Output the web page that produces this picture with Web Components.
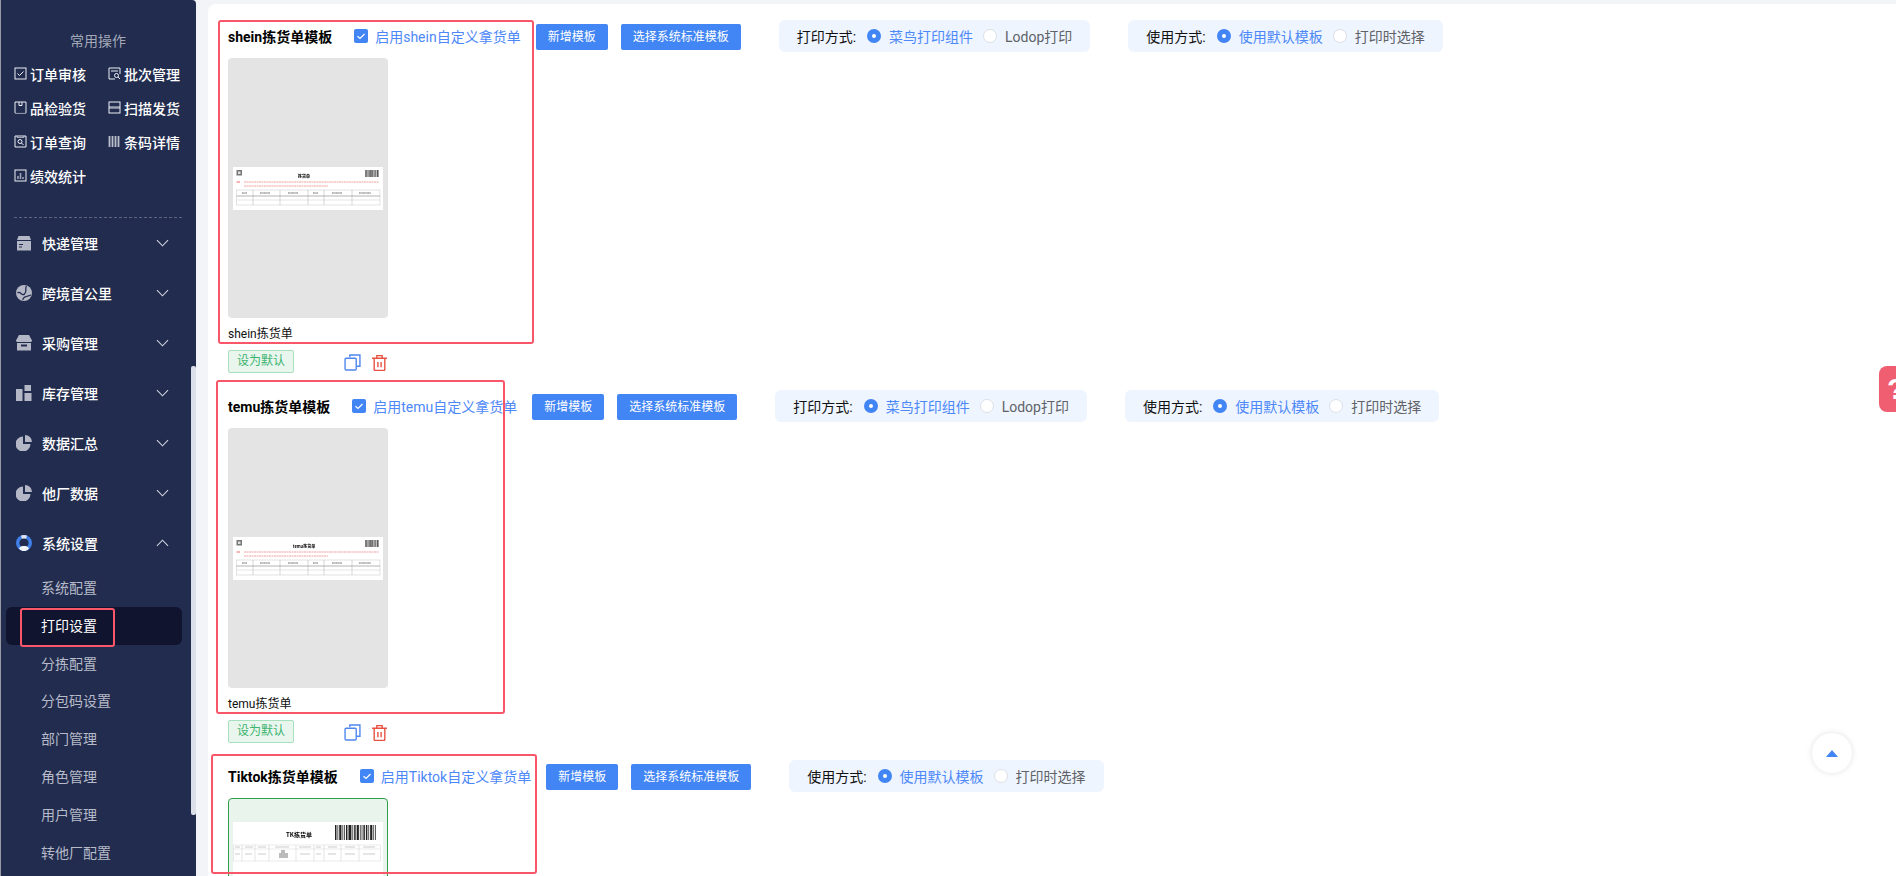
<!DOCTYPE html>
<html lang="zh">
<head>
<meta charset="utf-8">
<title>打印设置</title>
<style>
  html, body { margin: 0; height: 100%; overflow: hidden; background: #f3f4f8; }
  body { font: 14px Roboto, "Noto Sans CJK SC", sans-serif; }
</style>
</head>
<body>
<app-shell>
  <side-nav slot="nav">
    <nav-section>
      <quick-action icon="check" label="订单审核"></quick-action>
      <quick-action icon="batch" label="批次管理"></quick-action>
      <quick-action icon="box" label="品检验货"></quick-action>
      <quick-action icon="scan" label="扫描发货"></quick-action>
      <quick-action icon="search" label="订单查询"></quick-action>
      <quick-action icon="bars" label="条码详情"></quick-action>
      <quick-action icon="chart" label="绩效统计"></quick-action>
    </nav-section>
    <nav-item icon="parcel" label="快递管理"></nav-item>
    <nav-item icon="globe" label="跨境首公里"></nav-item>
    <nav-item icon="store" label="采购管理"></nav-item>
    <nav-item icon="stock" label="库存管理"></nav-item>
    <nav-item icon="pie" label="数据汇总"></nav-item>
    <nav-item icon="pie" label="他厂数据"></nav-item>
    <nav-item icon="ring" label="系统设置" open>
      <sub-item>系统配置</sub-item>
      <sub-item active>打印设置</sub-item>
      <sub-item>分拣配置</sub-item>
      <sub-item>分包码设置</sub-item>
      <sub-item>部门管理</sub-item>
      <sub-item>角色管理</sub-item>
      <sub-item>用户管理</sub-item>
      <sub-item>转他厂配置</sub-item>
    </nav-item>
  </side-nav>

  <pick-section name="shein" title-text="shein拣货单模板" enable="启用shein自定义拿货单" print caption="shein拣货单"></pick-section>
  <pick-section name="temu" title-text="temu拣货单模板" enable="启用temu自定义拿货单" print caption="temu拣货单"></pick-section>
  <pick-section name="tk" title-text="Tiktok拣货单模板" enable="启用Tiktok自定义拿货单"></pick-section>

  <!-- red review marks, they sit on top of the page -->
  <red-mark style="left:218px;top:20px;width:316px;height:324px"></red-mark>
  <red-mark style="left:216px;top:380px;width:289px;height:334px"></red-mark>
  <red-mark style="left:211px;top:754px;width:326px;height:120px"></red-mark>
  <red-mark style="left:20px;top:608px;width:95px;height:39px"></red-mark>
  <help-tab></help-tab>
  <scroll-top></scroll-top>
</app-shell>

<script>
const SMALL_ICONS = {
  check: '<rect x="1" y="1" width="11" height="11"/><path d="M3.500 6.500l2 2 4-4"/>',
  batch: '<path d="M12 7V1H1v11h6"/><path d="M3 4h7"/><circle cx="8.500" cy="8.500" r="2"/><path d="M10 10l2 2"/>',
  box: '<path d="M1 12V1h11v11"/><path d="M1 12.400h11" stroke-opacity=".6"/><path d="M5 1v3.500h3V1"/>',
  scan: '<rect x="1" y="1" width="11" height="11"/><path d="M1 6.500h11" stroke-width="2.400" stroke-opacity=".6"/>',
  search: '<path d="M1 1h11v11H1z"/><path d="M3 1v1.500h7V1" stroke-opacity=".6"/><circle cx="6" cy="6.500" r="2"/><path d="M7.500 8l2 2"/>',
  bars: '<path d="M1.500 1v11M4.500 1v11M7.500 1v11M10.500 1v11" stroke-width="1.800" stroke-opacity=".75"/>',
  chart: '<rect x="1" y="1" width="11" height="11"/><path d="M4 10V7M6.500 10V4M9 10V8" stroke-width="1.600" stroke-opacity=".6"/>'
};

const MENU_ICONS = {
  parcel: '<path d="M1 5l1.500-4h11L15 5z"/><path d="M1 6h14v9.500H1z"/><path d="M3 9.500h4M3 12h3" stroke="#222c4e" stroke-width="1.200"/>',
  globe: '<circle cx="8" cy="8" r="8"/><path d="M1.500 8c3-3 4 4 7 1s0-6 2-8M7 15c-1-3 5-4 8-5" stroke="#222c4e" stroke-width="1.300" fill="none"/>',
  store: '<path d="M3 0h10l3 5.500c0 1-1 1.500-2 1.500H2C1 7 0 6.500 0 5.500z"/><path d="M1 8h14v7.500H1z"/><path d="M5 9.500h6v2H5z" fill="#222c4e"/>',
  stock: '<path d="M0 4h6.500v12H0zM8.500 0H15v6H8.500zM8.500 8H15.500v8H8.500z"/>',
  pie: '<path d="M7 1.500V9h7.500A7.500 7.500 0 1 1 7 1.500z"/><path d="M9 0a7 7 0 0 1 7 7H9z"/>',
  ring: '<circle cx="8" cy="8" r="8" fill="#3f7fe8"/><path d="M5 .6a8 8 0 0 1 6 0L10 4H6z" fill="#dfe4f2"/><circle cx="8" cy="8" r="4.600" fill="#222c4e"/><path d="M3 13.500c1-2 2.500-2.500 5-2.500s4 .5 5 2.500C11.500 15.500 9.500 16 8 16s-3.500-.5-5-2.500z" fill="#f2f4fa"/>'
};

class AppShell extends HTMLElement {
  constructor() {
    super();
    this.attachShadow({ mode: "open" }).innerHTML = `
      <style>
        :host { display: flex; height: 876px; position: relative; overflow: hidden; }
        .edge { width: 1px; flex: none; background: #9a9aa3; }
        main { flex: 1; margin: 4px 0 0 12px; padding: 16px 0 0 20px; background: #fff; border-radius: 8px 0 0 0; overflow: hidden; }
      </style>
      <div class="edge"></div>
      <slot name="nav"></slot>
      <main><slot></slot></main>`;
  }
}

class SideNav extends HTMLElement {
  constructor() {
    super();
    this.attachShadow({ mode: "open" }).innerHTML = `
      <style>
        :host { display: block; position: relative; flex: none; width: 195px; height: 876px; background: #222c4e; border-radius: 0 4px 0 0; overflow: hidden; }
        .bar { position: absolute; left: 190px; top: 366px; width: 5px; height: 449px; background: #dcdfe7; border-radius: 2px; }
      </style>
      <slot></slot>
      <div class="bar"></div>`;
  }
}

class NavSection extends HTMLElement {
  constructor() {
    super();
    this.attachShadow({ mode: "open" }).innerHTML = `
      <style>
        :host { display: block; padding: 30px 14px 0 13px; }
        h3 { margin: 0 0 7px; font: 400 14px/20px "Noto Sans CJK SC", sans-serif; color: #a3a8b9; text-align: center; }
        .grid { display: grid; grid-template-columns: 94px 1fr; grid-auto-rows: 34px; }
        hr { margin: 24px 0 0; border: 0; border-top: 1px dashed #5d6581; }
      </style>
      <h3>常用操作</h3>
      <div class="grid"><slot></slot></div>
      <hr>`;
  }
}

class QuickAction extends HTMLElement {
  constructor() {
    super();
    const icon = SMALL_ICONS[this.getAttribute("icon")];
    this.attachShadow({ mode: "open" }).innerHTML = `
      <style>
        :host { display: flex; align-items: center; gap: 3px; color: #fff; font: 500 14px "Noto Sans CJK SC", sans-serif; white-space: nowrap; }
        svg { width: 13px; height: 13px; flex: none; fill: none; stroke: #eef0f6; stroke-width: 1; margin-top: -1px; }
      </style>
      <svg viewBox="0 0 13 13">${icon}</svg><span>${this.getAttribute("label")}</span>`;
  }
}

class NavItem extends HTMLElement {
  constructor() {
    super();
    const open = this.hasAttribute("open");
    const chevron = open ? "M1 7l6-6 6 6" : "M1 1l6 6 6-6";
    this.attachShadow({ mode: "open" }).innerHTML = `
      <style>
        :host { display: block; }
        .row { display: flex; align-items: center; height: 50px; padding: 0 27px 0 15px; color: #fff; font: 500 14px "Noto Sans CJK SC", sans-serif; }
        .ic { width: 16px; height: 16px; flex: none; fill: #b4b7c5; margin-right: 10px; }
        .ch { width: 13px; height: 8px; margin-left: auto; fill: none; stroke: #d6d9e3; stroke-width: 1.1; }
        .subs { padding-top: 1px; }
      </style>
      <div class="row">
        <svg class="ic" viewBox="0 0 16 16">${MENU_ICONS[this.getAttribute("icon")]}</svg>
        <span>${this.getAttribute("label")}</span>
        <svg class="ch" viewBox="0 0 14 8"><path d="${chevron}"/></svg>
      </div>
      ${open ? '<div class="subs"><slot></slot></div>' : ""}`;
  }
}

class SubItem extends HTMLElement {
  constructor() {
    super();
    const active = this.hasAttribute("active");
    this.attachShadow({ mode: "open" }).innerHTML = `
      <style>
        :host { display: block; height: 37.8px; padding: 0 14px 0 5px; }
        div { height: 37.8px; padding-left: 35px; border-radius: 6px; font: 400 14px/37px "Noto Sans CJK SC", sans-serif;
          color: ${active ? "#fff" : "#b7bbc9"}; background: ${active ? "#10142f" : "none"}; }
      </style>
      <div><slot></slot></div>`;
  }
}

class PickSection extends HTMLElement {
  constructor() {
    super();
    const a = (n) => this.getAttribute(n);
    const printPill = this.hasAttribute("print")
      ? `<mode-pill label="打印方式:" first="菜鸟打印组件" second="Lodop打印"></mode-pill>` : "";
    const caption = a("caption");
    this.attachShadow({ mode: "open" }).innerHTML = `
      <style>
        :host { display: block; height: 370px; font: 14px Roboto, "Noto Sans CJK SC", sans-serif; color: #000; }
        .head { display: flex; align-items: center; height: 32px; margin-bottom: 6px; white-space: nowrap; }
        b { font-weight: 700; font-size: 14px; margin-right: 22px; }
        .chk { display: flex; align-items: center; gap: 7px; color: #4d88f8; margin-right: 15px; }
        .box { width: 14px; height: 14px; background: #4285f4; border-radius: 2px; display: flex; }
        .box svg { width: 14px; height: 14px; fill: none; stroke: #fff; stroke-width: 1.2; }
        .btn { height: 26px; margin-top: 1px; padding: 0 12px; margin-right: 13px; background: #4285f4; color: #fff; font-size: 12px; line-height: 26px; border-radius: 2px; }
        .pills { display: flex; gap: 38px; margin-left: 25px; }
        .cap { font-size: 12px; line-height: 20px; margin-top: 6px; color: #111; }
        .ops { display: flex; align-items: center; margin-top: 6px; }
        .def { box-sizing: border-box; width: 66px; height: 23px; border: 1px solid #a6e0bd; border-radius: 2px; background: #e8f6ee; color: #3cb46e; font-size: 12px; line-height: 21px; text-align: center; }
        .ops svg { width: 17px; height: 17px; fill: none; stroke-width: 1.3; margin-top: 1px; }
        .copy { margin-left: 50px; stroke: #4f86ee; }
        .del { margin-left: 10px; stroke: #e8503f; }
      </style>
      <div class="head">
        <b>${a("title-text")}</b>
        <span class="chk"><span class="box"><svg viewBox="0 0 14 14"><path d="M3.500 7.200l2.500 2.300 4.500-4.500"/></svg></span>${a("enable")}</span>
        <span class="btn">新增模板</span>
        <span class="btn">选择系统标准模板</span>
        <span class="pills">${printPill}<mode-pill label="使用方式:" first="使用默认模板" second="打印时选择"></mode-pill></span>
      </div>
      <pick-preview variant="${a("name")}"></pick-preview>
      ${caption ? `<div class="cap">${caption}</div>
      <div class="ops">
        <span class="def">设为默认</span>
        <svg class="copy" viewBox="0 0 16 16"><path d="M5.500 3V1h9.500v10.500h-3"/><rect x="1" y="4" width="10.500" height="11" rx="1"/></svg>
        <svg class="del" viewBox="0 0 16 16"><path d="M1 4h14M5.500 4V1.500h5V4M3 4v10.500a1 1 0 0 0 1 1h8a1 1 0 0 0 1-1V4M6.500 7.500v5M9.500 7.500v5"/></svg>
      </div>` : ""}`;
  }
}

class ModePill extends HTMLElement {
  constructor() {
    super();
    this.attachShadow({ mode: "open" }).innerHTML = `
      <style>
        :host { display: flex; align-items: center; height: 32px; padding: 0 18px; background: #eef5ff; border-radius: 6px; font: 14px Roboto, "Noto Sans CJK SC", sans-serif; white-space: nowrap; color: #111; }
        i { box-sizing: border-box; width: 14px; height: 14px; border-radius: 50%; flex: none; margin: 0 8px 0 11px; }
        .on { border: 5px solid #4285f4; background: #fff; }
        .off { border: 1px solid #dcdfe6; background: #fff; margin: 0 8px 0 10px; }
        .blue { color: #4d88f8; }
        .grey { color: #606266; }
      </style>
      <span>${this.getAttribute("label")}</span>
      <i class="on"></i><span class="blue">${this.getAttribute("first")}</span>
      <i class="off"></i><span class="grey">${this.getAttribute("second")}</span>`;
  }
}

// little barcode, widths just repeat so it looks right when it is this small
function barcode(x, y, w, h) {
  const widths = [1, .5, 1.5, .5, .5, 1, 2, .5, 1, 1.5, .5, .5, 1];
  let out = "", at = x, i = 0;
  while (at < x + w) {
    const bw = widths[i % widths.length] * (w / 28);
    out += `<rect x="${at}" y="${y}" width="${bw}" height="${h}" fill="#222"/>`;
    at += bw + (w / 40);
    i++;
  }
  return out;
}

class PickPreview extends HTMLElement {
  constructor() {
    super();
    const v = this.getAttribute("variant");
    this.attachShadow({ mode: "open" }).innerHTML = `
      <style>
        :host { display: block; box-sizing: border-box; width: 160px; height: 260px; border-radius: 4px; background: #e4e4e4; padding: 109px 5px 0; }
        :host([variant="tk"]) { background: #e9f4ec; border: 1px solid #2e9e4c; padding: 23px 4px 0; }
        svg { display: block; width: 150px; height: 43px; background: #fff; filter: blur(.25px); }
        svg.tall { height: 70px; }
      </style>
      ${v == "tk" ? this.tkSheet() : this.plainSheet(v == "temu" ? "temu拣货单" : "拣货单")}`;
  }
  plainSheet(name) {
    const cols = [20, 47, 75, 91, 119].map((x) => `<path d="M${x} 23v15" stroke="#999" stroke-width=".4"/>`).join("");
    return `<svg viewBox="0 0 150 43">
      <path d="M3.500 3h5.500v5.500H3.500z" fill="#777"/><path d="M5 4.500h2.500v2.500H5z" fill="#ddd"/>
      <text x="71" y="10.500" font-size="4" font-weight="700" text-anchor="middle" font-family="Noto Sans CJK SC, sans-serif">${name}</text>
      ${barcode(132, 3, 14, 7)}
      <path d="M3.500 15H7" stroke="#ee5a5a" stroke-width=".9"/>
      <path d="M11 15H146M11 19H95" stroke="#f08a8a" stroke-width=".8" stroke-dasharray="2 .5"/>
      <rect x="3.500" y="23" width="143.500" height="15" fill="none" stroke="#bbb" stroke-width=".4"/>
      <path d="M3.500 29H147" stroke="#666" stroke-width=".5"/>
      <path d="M3.500 33H147" stroke="#bbb" stroke-width=".4"/>
      <path d="M9 26h5M27 26h10M55 26h10M80 26h5M99 26h10M126 26h12" stroke="#666" stroke-width="1.200" stroke-dasharray="1 .3"/>
      ${cols}
    </svg>`;
  }
  tkSheet() {
    const cols = [9, 22, 36, 63, 81, 91, 108, 126].map((x) => `<path d="M${x} 23v16" stroke="#bbb" stroke-width=".4"/>`).join("");
    return `<svg class="tall" viewBox="0 0 150 70">
      <text x="66" y="15" font-size="6" font-weight="700" text-anchor="middle" font-family="Noto Sans CJK SC, sans-serif">TK拣货单</text>
      ${barcode(102, 3, 41, 15)}
      <rect x=".5" y="23" width="147" height="16" fill="none" stroke="#ccc" stroke-width=".4"/>
      <path d="M.5 27H147.500" stroke="#ccc" stroke-width=".4"/>
      <path d="M2 25h5M12 25h8M25 25h8M42 25h14M66 25h12M83 25h5M95 25h9M112 25h10M130 25h12M2 32h5M12 32h7M25 32h8M67 32h10M83 32h5M95 32h8M112 32h10M130 32h12" stroke="#aaa" stroke-width=".6"/>
      <path d="M48 28h4v3h3v5h-9v-5h2z" fill="#bbb"/>
      ${cols}
    </svg>`;
  }
}

class RedMark extends HTMLElement {
  constructor() {
    super();
    this.attachShadow({ mode: "open" }).innerHTML = `
      <style>:host { display: block; position: absolute; box-sizing: border-box; border: 2px solid #f9566a; border-radius: 3px; pointer-events: none; }</style>`;
  }
}

class HelpTab extends HTMLElement {
  constructor() {
    super();
    this.attachShadow({ mode: "open" }).innerHTML = `
      <style>
        :host { display: block; position: absolute; left: 1879px; top: 366px; width: 17px; height: 46px; background: #ef5f71; border-radius: 8px 0 0 8px; overflow: hidden; }
        span { position: absolute; left: 8px; top: 3px; color: #fff; font: 700 30px/40px "Liberation Sans", sans-serif; }
      </style>
      <span>?</span>`;
  }
}

class ScrollTop extends HTMLElement {
  constructor() {
    super();
    this.attachShadow({ mode: "open" }).innerHTML = `
      <style>
        :host { display: flex; align-items: center; justify-content: center; position: absolute; left: 1812px; top: 733px; width: 40px; height: 40px; border-radius: 50%; background: #fff; box-shadow: 0 0 6px rgba(0,0,0,.12); }
        i { width: 0; height: 0; border: 6.500px solid transparent; border-top: 0; border-bottom: 7px solid #4285f4; }
      </style>
      <i></i>`;
  }
}

customElements.define("mode-pill", ModePill);
customElements.define("pick-preview", PickPreview);
customElements.define("app-shell", AppShell);
customElements.define("side-nav", SideNav);
customElements.define("nav-section", NavSection);
customElements.define("quick-action", QuickAction);
customElements.define("nav-item", NavItem);
customElements.define("sub-item", SubItem);
customElements.define("pick-section", PickSection);
customElements.define("red-mark", RedMark);
customElements.define("help-tab", HelpTab);
customElements.define("scroll-top", ScrollTop);
</script>
</body>
</html>
